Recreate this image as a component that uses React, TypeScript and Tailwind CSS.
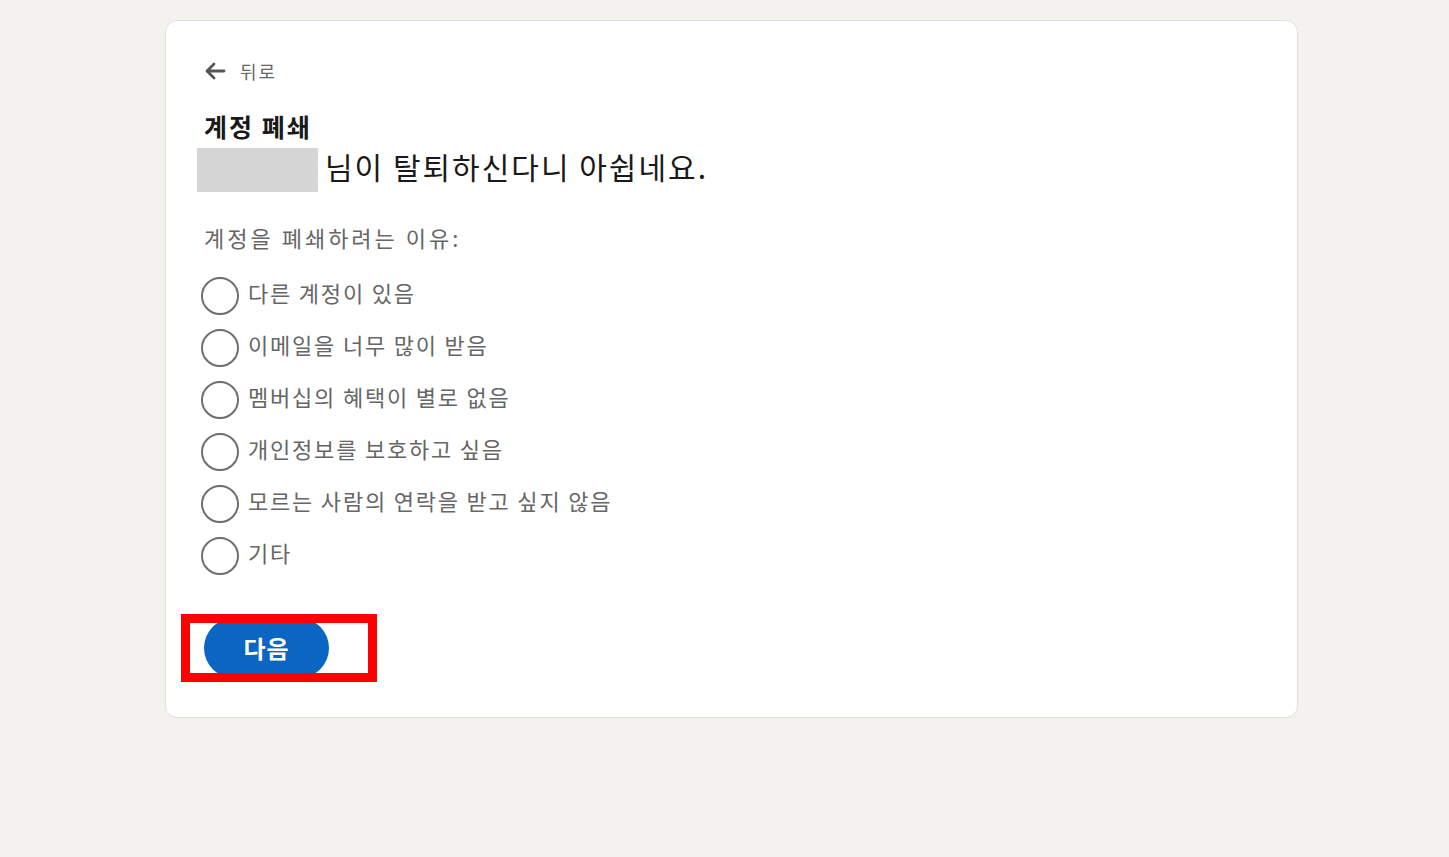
import React from "react";

const reasons = [
  "다른 계정이 있음",
  "이메일을 너무 많이 받음",
  "멤버십의 혜택이 별로 없음",
  "개인정보를 보호하고 싶음",
  "모르는 사람의 연락을 받고 싶지 않음",
  "기타",
];

export default function App() {
  return (
    <div
      className="min-h-[857px] w-full bg-[#f3f2ef] pt-[20px]"
      style={{ fontFamily: '"Noto Sans CJK KR", "Noto Sans", sans-serif' }}
    >
      <div className="ml-[165px] w-[1133px] rounded-[12px] border border-[#e0dfdc] bg-white pl-[38px] pt-[38px] pb-[35px]">
        <div className="flex h-[24px] items-center gap-[14px]">
          <svg width="22" height="18" viewBox="0 0 22 18" fill="none">
            <path d="M20 9H3M10 2L3 9L10 16" stroke="#555" strokeWidth="2.8" strokeLinecap="round" strokeLinejoin="round" />
          </svg>
          <span className="text-[18px] leading-[24px] tracking-[2px] text-[#666]">뒤로</span>
        </div>
        <h1 className="mt-[29px] pb-[4px] text-[25px] font-bold leading-[28px] tracking-[2px] text-[#191919]">계정 폐쇄</h1>
        <div className="mt-[4px] -ml-[7px] flex h-[44px] items-center">
          <div className="h-[44px] w-[121px] bg-[#d6d6d6]" />
          <span className="ml-[7px] pb-[8px] text-[30px] leading-[36px] tracking-[2px] text-[#191919]">님이 탈퇴하신다니 아쉽네요.</span>
        </div>
        <p className="mt-[33px] pb-[6px] text-[22px] leading-[24px] tracking-[3px] text-[#666]">계정을 폐쇄하려는 이유:</p>
        <div className="mt-[21px] -ml-[3px] flex flex-col gap-[12px]">
          {reasons.map((r) => (
            <label key={r} className="flex h-[40px] items-center gap-[9px]">
              <span className="h-[38px] w-[38px] shrink-0 rounded-full border-2 border-[#6e6e6e]" />
              <span className="pb-[8px] text-[22px] leading-[30px] tracking-[1.8px] text-[#666]">{r}</span>
            </label>
          ))}
        </div>
        <div className="mt-[38px] -ml-[23px] flex h-[68px] w-[196px] overflow-hidden border-[9px] border-[#ff0000] bg-white">
          <button className="ml-[14px] -mt-[5px] flex h-[60px] w-[125px] shrink-0 items-center justify-center rounded-full bg-[#0a66c2] text-[24px] font-bold tracking-[1px] text-white">
            다음
          </button>
        </div>
      </div>
    </div>
  );
}
